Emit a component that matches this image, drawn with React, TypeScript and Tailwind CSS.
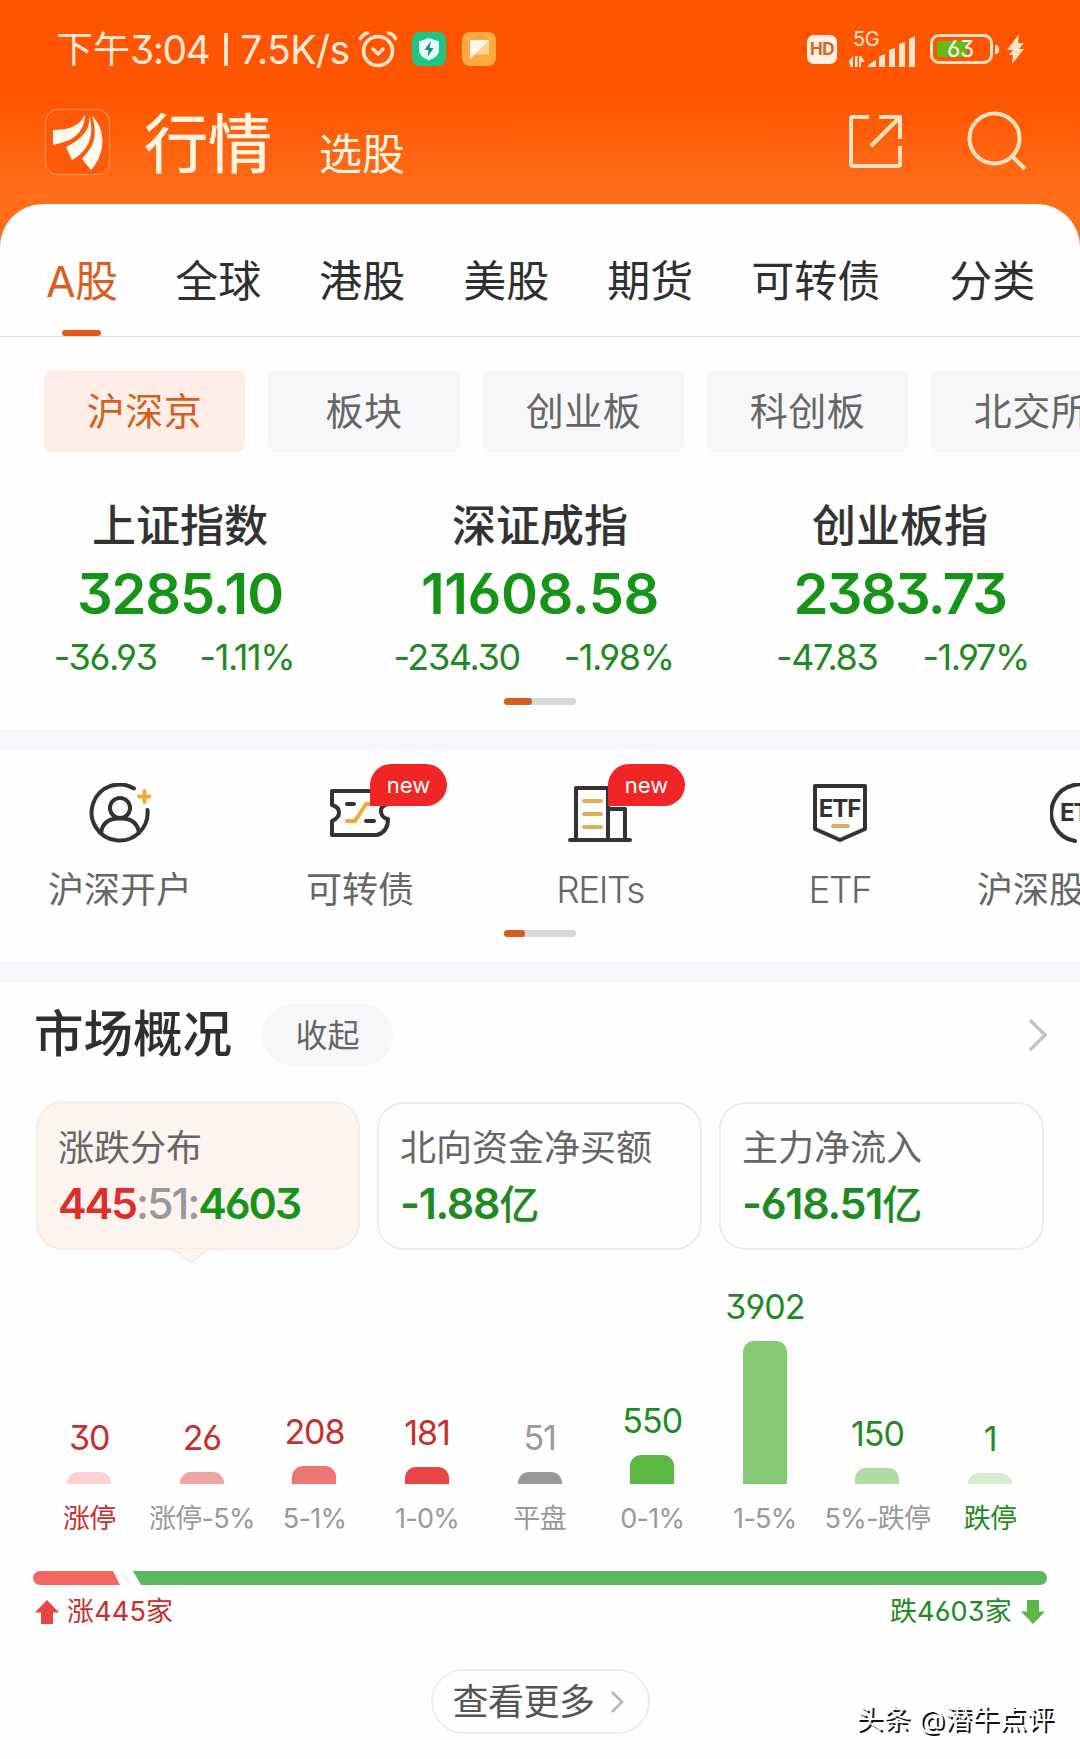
const tabs = [
  { name: "全球", className: "ml-[58px]" },
  { name: "港股", className: "ml-[58px]" },
  { name: "美股", className: "ml-[58px]" },
  { name: "期货", className: "ml-[58px]" },
  { name: "可转债", className: "ml-[58px]" },
  { name: "分类", className: "ml-[69px]" },
];

const chips = [
  { name: "沪深京", className: "w-[201px] bg-[#feeee7] text-[#d2601f]" },
  { name: "板块", className: "w-[192px] bg-[#f7f7fa] text-[#666]" },
  { name: "创业板", className: "w-[201px] bg-[#f7f7fa] text-[#666]" },
  { name: "科创板", className: "w-[201px] bg-[#f7f7fa] text-[#666]" },
  { name: "北交所", className: "w-[201px] bg-[#f7f7fa] text-[#666]" },
];

const indices = [
  { name: "上证指数", value: "3285.10", change: "-36.93", percent: "-1.11%", valueClass: "tracking-[-1.1px]", className: "pr-[12px] gap-[43px]" },
  { name: "深证成指", value: "11608.58", change: "-234.30", percent: "-1.98%", valueClass: "tracking-[-0.4px]", className: "pr-[13px] gap-[44px]" },
  { name: "创业板指", value: "2383.73", change: "-47.83", percent: "-1.97%", valueClass: "tracking-[-1.7px]", className: "pl-[5px] gap-[45px]" },
];

const bars = [
  { label: "涨停", value: 30, height: 12, bar: "bg-[#f9d3d1]", text: "text-[#c5302f]", labelText: "text-[#c5302f]" },
  { label: "涨停-5%", value: 26, height: 12, bar: "bg-[#eda5a6]", text: "text-[#c5302f]", labelText: "text-[#999]" },
  { label: "5-1%", value: 208, height: 18, bar: "bg-[#ec7676]", text: "text-[#c5302f]", labelText: "text-[#999]" },
  { label: "1-0%", value: 181, height: 17, bar: "bg-[#e84646]", text: "text-[#c5302f]", labelText: "text-[#999]" },
  { label: "平盘", value: 51, height: 12, bar: "bg-[#999]", text: "text-[#999]", labelText: "text-[#999]" },
  { label: "0-1%", value: 550, height: 29, bar: "bg-[#5cb743]", text: "text-[#1f8a24]", labelText: "text-[#999]" },
  { label: "1-5%", value: 3902, height: 143, bar: "bg-[#84ca75]", text: "text-[#1f8a24]", labelText: "text-[#999]" },
  { label: "5%-跌停", value: 150, height: 16, bar: "bg-[#aedca3]", text: "text-[#1f8a24]", labelText: "text-[#999]" },
  { label: "跌停", value: 1, height: 11, bar: "bg-[#d6edd0]", text: "text-[#1f8a24]", labelText: "text-[#1f8a24]" },
];

function StatusBar() {
  return (
    <div className="flex h-[98px] items-center pl-[56px] pr-[56px] text-[#ffe9d6]">
      <span className="text-[37px] leading-none">下午</span>
      <span className="text-[39px] leading-none tracking-[-1.5px]">3:04</span>
      <span className="ml-[15px] h-[33px] w-[4px] bg-[#ffe3cb]" />
      <span className="ml-[12px] text-[39px] leading-none tracking-[-0.5px]">7.5K/s</span>
      <svg className="ml-[8px]" width="40" height="38" viewBox="0 0 40 38" fill="none" stroke="#ffe3cb" strokeLinecap="round">
        <circle cx="20" cy="21" r="14.5" strokeWidth="3.6" />
        <path d="M15 19l5 5 5-5" strokeWidth="3.4" strokeLinejoin="round" />
        <path d="M2.500 8.500Q5 4 9.500 3M37.500 8.500Q35 4 30.500 3" strokeWidth="3.6" />
      </svg>
      <svg className="ml-[14px]" width="34" height="34" viewBox="0 0 34 34">
        <rect width="34" height="34" rx="8" fill="#1fc583" />
        <path d="M17 6l10 3.500v9q0 6-10 10-10-4-10-10v-9z" fill="#e6fffa" />
        <path d="M19 9l-6.500 9h4l-1 7 6-9h-4z" fill="#168c68" />
      </svg>
      <svg className="ml-[16px]" width="34" height="34" viewBox="0 0 34 34">
        <rect width="34" height="34" rx="8" fill="#ffab40" />
        <path d="M8 8h19v14.500H13L8 27z" fill="#ffd596" />
        <path d="M8 8h19L8 27z" fill="#fff8ea" />
      </svg>
      <span className="ml-auto flex h-[29px] w-[30px] items-center justify-center rounded-[7px] bg-[#fff0e6] text-[17px] font-bold leading-none tracking-[-0.5px] text-[#d9641f]">
        HD
      </span>
      <div className="ml-[12px] flex flex-col">
        <span className="h-[20px] pl-[4px] text-[20px] leading-[17px] tracking-[-0.5px]">5G</span>
        <svg className="-mt-[15px]" width="68" height="31" viewBox="0 0 68 31" fill="#ffe3cb">
          <path d="M4 20v11h-2.500l-1.500-6zM6 20h2.500v11H6zM10 20h2v11h-2zM12 20l4 6h-4z" />
          <path d="M27 24v7h-8q0-3 8-7zM31 20l5-2v13h-6v-10zM40 14l6-2v19h-6zM50 8l6-2v25h-6zM60 3l6-3v31h-6z" />
        </svg>
      </div>
      <div className="ml-[13px] flex h-[30px] w-[63px] rounded-[9px] border-[3px] border-[#ffdfc0] p-[4px]">
        <span className="flex h-full w-[30px] items-center rounded-l-[3px] bg-[#66b916] pl-[10px] text-[23px] leading-none tracking-[-0.5px] text-white">63</span>
      </div>
      <span className="ml-[2px] h-[9px] w-[4px] rounded-r bg-[#ffe3cb]" />
      <svg className="ml-[8px]" width="17" height="30" viewBox="0 0 17 30" fill="#ffe3cb">
        <path d="M12 0L0 16h6L2 21h4L5 30 17 15h-5l5-6h-6z" />
      </svg>
    </div>
  );
}

function TitleBar() {
  return (
    <div className="flex h-[106px] pl-[45px] text-[#fff4e0]">
      <div className="mt-[11px] flex h-[66px] w-[65px] items-center justify-center rounded-[13px] border border-[#ff9a63] bg-[#ff5a0a]">
        <svg width="51" height="56" viewBox="0 0 51 56" fill="#fffaf0">
          <path d="M33 1C27 13 15 16 1 16L1 31C14 28 32 24 33 1Z" />
          <path d="M37 1C39 17 29 25 14 33L20 46C34 38 44 24 37 1Z" />
          <path d="M40 2C46 22 42 32 30 45L39 56C52 42 56 17 40 2Z" />
        </svg>
      </div>
      <h1 className="ml-[34px] mt-[14px] text-[64px] leading-[64px] [-webkit-text-stroke:0.6px_#fff4e0]">行情</h1>
      <span className="ml-[47px] mt-[35px] text-[43px] leading-[43px]">选股</span>
      <svg className="ml-auto mt-[16px]" width="55" height="55" viewBox="0 0 55 55" fill="none" stroke="#ffe0c0" strokeWidth="4">
        <path d="M21 3H5Q3 3 3 5v45q0 2 2 2h45q2 0 2-2V32M31 3h21v22M52 3L23 32" />
      </svg>
      <svg className="ml-[64px] mr-[53px] mt-[13px]" width="60" height="60" viewBox="0 0 60 60" fill="none" stroke="#ffe0c0" strokeWidth="4">
        <circle cx="27.500" cy="27.500" r="25" />
        <path d="M45 45l13 13" />
      </svg>
    </div>
  );
}

function NewBadge() {
  return (
    <span className="absolute left-[40px] top-[-19px] flex h-[42px] w-[77px] items-center justify-center rounded-[21px] rounded-bl-none bg-[#f02626] text-[22px] leading-none text-white">
      new
    </span>
  );
}

function Pager({ active }: { active: string }) {
  return (
    <div className="mx-auto h-[7px] w-[72px] overflow-hidden rounded-[3px] bg-[#d8d8d8]">
      <div className={`h-full rounded-[3px] bg-[#cf5e20] ${active}`} />
    </div>
  );
}

function QuickEntries() {
  return (
    <div className="flex h-[180px] w-[1200px] pt-[33px] text-center text-[36px] leading-[40px] text-[#666]">
      <div className="flex w-[240px] flex-col items-center gap-[27px]">
        <svg width="62" height="60" viewBox="0 0 62 60" fill="none" stroke="#333" strokeWidth="4" strokeLinecap="round">
          <path d="M45 5.500A28 28 0 1 0 58.500 27" />
          <circle cx="31" cy="25" r="10" />
          <path d="M12 50Q14 35 31 35.500 48 35 50 50" />
          <path d="M55.500 8v11M50 13.500h11" stroke="#f0ab33" />
        </svg>
        <span>沪深开户</span>
      </div>
      <div className="flex w-[240px] flex-col items-center gap-[27px]">
        <div className="relative">
          <svg width="60" height="60" viewBox="0 0 60 60" fill="none" stroke="#333" strokeWidth="4" strokeLinecap="round" strokeLinejoin="round">
            <path d="M2 8H58V21Q50 23 51 29 52 35 58 36 58 49 47 52H2V38Q9 35 9 29.500T2 22Z" />
            <path d="M17 21h7M36 38h8" />
            <path d="M17 38h8L36 21h10" stroke="#f0ab33" />
          </svg>
          <NewBadge />
        </div>
        <span>可转债</span>
      </div>
      <div className="flex w-[240px] flex-col items-center gap-[27px]">
        <div className="relative">
          <svg width="64" height="60" viewBox="0 0 64 60" fill="none" stroke="#333" strokeWidth="4" strokeLinecap="round" strokeLinejoin="round">
            <path d="M2 57H62M8 57V5H40V57M40 26H57V57" />
            <path d="M16 18h17M16 31h17M16 44h17" stroke="#e0ae5a" />
          </svg>
          <NewBadge />
        </div>
        <span className="text-[37px] font-light tracking-[-1.5px]">REITs</span>
      </div>
      <div className="flex w-[240px] flex-col items-center gap-[27px]">
        <svg width="56" height="60" viewBox="0 0 56 60" fill="none" stroke="#333" strokeWidth="4" strokeLinejoin="round">
          <path d="M3 3H53V46L28 57 3 46Z" />
          <text x="27.500" y="33.500" textAnchor="middle" fill="#333" stroke="none" className="text-[24px] font-bold tracking-[-1px]">ETF</text>
          <path d="M21 43h15" stroke="#e0ae5a" strokeLinecap="round" />
        </svg>
        <span className="text-[37px] font-light tracking-[-1.5px]">ETF</span>
      </div>
      <div className="flex w-[240px] flex-col items-center gap-[27px]">
        <svg width="60" height="60" viewBox="0 0 60 60" fill="none" stroke="#333" strokeWidth="4" strokeLinecap="round">
          <path d="M25 58A28.500 28.500 0 1 1 45 54" />
          <text x="10" y="38" fill="#333" stroke="none" className="text-[24px] font-bold tracking-[-1px]">ETF</text>
        </svg>
        <span className="w-[206px] text-left">沪深股</span>
      </div>
    </div>
  );
}

function SummaryCards() {
  return (
    <div className="mt-[35px] flex gap-[17px] px-[36px] text-[36px] leading-[40px] text-[#666]">
      <div className="relative h-[149px] w-[324px] rounded-[27px] border-2 border-[#faeae3] bg-[#fef4ef] pl-[20px] pt-[25px]">
        <p>涨跌分布</p>
        <p className="mt-[15px] text-[43px] font-semibold tracking-[-2.1px] text-[#159417]">
          <span className="text-[#d92f2f]">445</span>
          <span className="font-medium text-[#999]">:51:</span>4603
        </p>
        <svg className="absolute left-[133px] top-[145px]" width="40" height="16" viewBox="0 0 40 16" fill="#fef4ef" stroke="#faeae3" strokeWidth="2">
          <path d="M0 1Q6 2 17 13 20 15.500 23 13 34 2 40 1" />
        </svg>
      </div>
      <div className="mt-px h-[148px] w-[325px] rounded-[27px] border-2 border-[#ebebeb] pl-[21px] pt-[24px]">
        <p>北向资金净买额</p>
        <p className="mt-[15px] text-[43px] font-semibold tracking-[-1.3px] text-[#1f8a1f]">
          -1.88<span className="text-[40px] font-medium tracking-normal">亿</span>
        </p>
      </div>
      <div className="mt-px h-[148px] w-[325px] rounded-[27px] border-2 border-[#ebebeb] pl-[21px] pt-[24px]">
        <p>主力净流入</p>
        <p className="mt-[15px] text-[43px] font-semibold tracking-[-1.3px] text-[#1f8a1f]">
          -618.51<span className="text-[40px] font-medium tracking-normal">亿</span>
        </p>
      </div>
    </div>
  );
}

export default function App() {
  return (
    <div className="relative h-[1759px] w-[1080px] overflow-hidden bg-[linear-gradient(180deg,#ff5500_0px,#ff5500_95px,#ff6d1a_190px,#ff6d1a_100%)] font-[Inter,'Noto_Sans_CJK_SC',sans-serif] [font-feature-settings:'cv03','cv04','cv09']">
      <StatusBar />
      <TitleBar />
      <main className="h-[1555px] overflow-hidden rounded-t-[43px] bg-[#fefefe]">
        <nav className="flex h-[133px] border-b border-[#dedede] pl-[46px] pt-[51px] text-[43px] leading-[52px] text-[#2f2f2f]">
          <div className="flex flex-col items-center text-[#d9601f]">
            <span className="tracking-[-0.7px]">A股</span>
            <span className="mt-[23px] h-[6px] w-[39px] rounded-[3px] bg-[#de5b1c]" />
          </div>
          {tabs.map((tab) => (
            <span key={tab.name} className={`h-[52px] shrink-0 ${tab.className}`}>
              {tab.name}
            </span>
          ))}
        </nav>

        <div className="mt-[33px] flex gap-[23px] pl-[44px]">
          {chips.map((chip) => (
            <span key={chip.name} className={`h-[82px] shrink-0 rounded-[8px] text-center text-[38px] leading-[82px] tracking-[0.5px] ${chip.className}`}>
              {chip.name}
            </span>
          ))}
        </div>

        <div className="mt-[48px] flex h-[198px]">
          {indices.map((item) => (
            <div key={item.name} className="flex w-[360px] flex-col items-center">
              <span className="text-[44px] font-medium leading-[52px] text-[#333]">{item.name}</span>
              <span className={`mt-[12px] text-[56px] font-semibold leading-[60px] text-[#159417] ${item.valueClass}`}>{item.value}</span>
              <div className={`mt-[13px] flex text-[36px] leading-[40px] tracking-[-1.4px] text-[#1f8a24] ${item.className}`}>
                <span>{item.change}</span>
                <span>{item.percent}</span>
              </div>
            </div>
          ))}
        </div>
        <Pager active="w-[28px]" />

        <div className="mt-[24px] h-[21px] bg-[#f5f7fa]" />
        <QuickEntries />
        <Pager active="w-[21px]" />
        <div className="mt-[24px] h-[22px] bg-[#f5f7fa]" />

        <div className="flex h-[83px] items-center pl-[34px] pt-[21px]">
          <h2 className="text-[49.5px] font-medium leading-none text-[#2f2f2f]">市场概况</h2>
          <span className="ml-[30px] h-[62px] w-[131px] rounded-[31px] bg-[#f7f7fa] text-center text-[32px] leading-[64px] text-[#666]">收起</span>
          <svg className="ml-auto mr-[31px]" width="22" height="34" viewBox="0 0 22 34" fill="none" stroke="#c4c4c4" strokeWidth="3.500">
            <path d="M3 2l15 15L3 32" />
          </svg>
        </div>

        <SummaryCards />

        <div className="mt-[34px] flex h-[250px] items-end pl-[33px]">
          {bars.map((bar) => (
            <div key={bar.label} className="flex w-[112.6px] flex-col items-center">
              <span className={`text-[34px] leading-[34px] tracking-[-1px] ${bar.text}`}>{bar.value}</span>
              <div className={`mt-[17px] w-[44px] rounded-t-[11px] ${bar.bar}`} style={{ height: bar.height }} />
              <span className={`mt-[20px] whitespace-nowrap text-[27px] leading-[30px] tracking-[-0.7px] ${bar.labelText}`}>{bar.label}</span>
            </div>
          ))}
        </div>

        <svg className="ml-[33px] mt-[37px]" width="1014" height="14" viewBox="0 0 1014 14">
          <path d="M7 0H80L87 14H7A7 7 0 0 1 7 0Z" fill="#f26763" />
          <path d="M89 0L97 14" stroke="#dde5e5" />
          <path d="M100 0H1007A7 7 0 0 1 1007 14H108Z" fill="#5cb860" />
        </svg>

        <div className="mt-[10px] flex h-[34px] items-center pl-[35px] pr-[35px] text-[27px] leading-[34px] tracking-[0.2px]">
          <svg width="24" height="24" viewBox="0 0 24 24" fill="#e84646">
            <path d="M12 0L24 12.500H18V24H6V12.500H0Z" />
          </svg>
          <span className="ml-[8px] text-[#c5302f]">涨445家</span>
          <span className="ml-auto text-[#1f8a24]">跌4603家</span>
          <svg className="ml-[9px]" width="24" height="24" viewBox="0 0 24 24" fill="#5cb743">
            <path d="M6 0H18V11.500H24L12 24 0 11.500H6Z" />
          </svg>
        </div>

        <div className="mx-auto mt-[40px] flex h-[65px] w-[219px] items-center rounded-full border-2 border-[#ededed] pl-[20px] text-[36px] leading-none text-[#555]">
          <span className="tracking-[-0.5px]">查看更多</span>
          <svg className="ml-[14px]" width="16" height="22" viewBox="0 0 16 22" fill="none" stroke="#b5b5b5" strokeWidth="2.500">
            <path d="M3 1l10 10L3 21" />
          </svg>
        </div>
      </main>

      <span className="absolute left-[856px] top-[1703px] whitespace-nowrap text-[27px] leading-[34px] tracking-[0.3px] text-white [text-shadow:2px_2px_0_#111]">
        头条 @潜牛点评
      </span>
    </div>
  );
}
